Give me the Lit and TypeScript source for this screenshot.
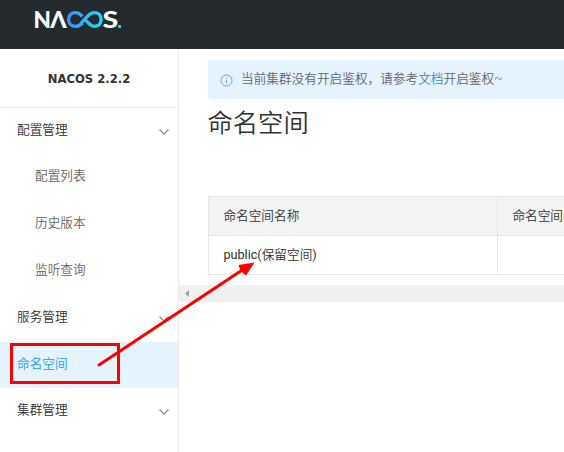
import { LitElement, html, css } from "lit";
import { customElement } from "lit/decorators.js";
import { classMap } from "lit/directives/class-map.js";

interface Entry { label: string; sub?: boolean; arrow?: boolean; active?: boolean; }

const entries: Entry[] = [
  { label: "配置管理", arrow: true },
  { label: "配置列表", sub: true },
  { label: "历史版本", sub: true },
  { label: "监听查询", sub: true },
  { label: "服务管理", arrow: true },
  { label: "命名空间", active: true },
  { label: "集群管理", arrow: true },
];

@customElement("app-root")
export class AppRoot extends LitElement {
  static styles = css`
    :host {
      display: flex; flex-direction: column; position: relative;
      width: 564px; height: 452px; overflow: hidden; background: #fff;
      font: 350 12.67px/20px Roboto, "Noto Sans CJK SC", sans-serif; color: #333;
    }
    * { box-sizing: border-box; }
    header { height: 49px; flex: none; background: #252a2f; padding-left: 32px; }
    .logo { display: block; width: 96px; height: 40px; }
    .logo text { font-family: Lato, sans-serif; font-weight: 900; fill: #fff; }
    .body { display: flex; flex: 1; min-height: 0; }
    nav { width: 179px; flex: none; border-right: 1px solid #ebebeb; }
    .version {
      height: 59px; border-bottom: 1px solid #ebebeb; text-align: center;
      font: bold 11.6px/60px "DejaVu Sans", sans-serif;
    }
    .item { height: 46.7px; display: flex; align-items: center; justify-content: space-between; padding: 0 8px 2px 17px; }
    .item.sub { padding: 0 8px 3.4px 35px; color: #666; }
    .item.active { background: #e4f3fe; color: #209bfa; height: 46px; margin-top: 0.6px; }
    .chev { width: 12px; height: 8px; margin-top: 3px; fill: none; stroke: #888; stroke-width: 1.1; }
    main { flex: 1; min-width: 0; padding-top: 11px; }
    .notice {
      height: 39px; margin-left: 29px; padding: 0 0 2px 12px; display: flex; align-items: center; gap: 8px;
      background: #e4f3fe; border-radius: 3px 0 0 3px; color: #666; white-space: nowrap;
    }
    .notice svg { width: 13px; height: 13px; margin-top: 3px; fill: none; stroke: #6699ff; }
    .notice a { color: #4a7fcb; }
    h1 { margin: 5px 0 0 28.5px; font-size: 25.3px; line-height: 40px; font-weight: 350; }
    .table {
      margin: 52px -40px 0 29px; display: grid; grid-template-columns: 289px 1fr;
      border: solid #e6e6e6; border-width: 1px 0 0 1px;
    }
    .cell { height: 39px; border: solid #e6e6e6; border-width: 0 1px 1px 0; padding-left: 14.4px; line-height: 37px; white-space: nowrap; }
    .latin { font-weight: 400; }
    .head { background: #f4f4f4; }
    .scroll { height: 17px; margin-top: 10px; background: #f0f0f0; display: flex; align-items: center; padding-left: 6px; }
    .scroll svg { width: 4px; height: 7px; fill: #a0a0a0; }
    .marks { position: absolute; inset: 0; width: 564px; height: 452px; }
  `;

  private chevron() {
    return html`<svg class="chev" viewBox="0 0 12 8"><path d="M1.5 1.5 6 6 10.5 1.5" /></svg>`;
  }

  render() {
    return html`
      <header>
        <svg class="logo" viewBox="32 0 96 40">
          <defs>
            <linearGradient id="wave" x1="66" x2="103" y1="0" y2="0" gradientUnits="userSpaceOnUse">
              <stop offset="0" stop-color="#4389f8" /><stop offset="1" stop-color="#18e1f5" />
            </linearGradient>
          </defs>
          <text x="33.4" y="27.6" font-size="23" textLength="17.4" lengthAdjust="spacingAndGlyphs">N</text>
          <text x="50.3" y="27.6" font-size="23" textLength="16.5" lengthAdjust="spacingAndGlyphs">Λ</text>
          <path d="M82.4 23C80 25.4 77.8 26.4 75.4 26.4C71.4 26.4 68.6 23.5 68.6 19.5S71.4 12.6 75.4 12.6C78.4 12.6 80.2 14 82.4 16.4M80.8 23.6C86.8 17.2 89.2 12.6 94.3 12.6C98.3 12.6 101.1 15.5 101.1 19.5S98.3 26.4 94.3 26.4C91 26.4 89 24 85.2 19.6" fill="none" stroke="url(#wave)" stroke-width="3.4" />
          <text x="102.4" y="27.6" font-size="23" textLength="15.8" lengthAdjust="spacingAndGlyphs">S</text>
          <rect x="118" y="25" width="3" height="3" fill="#18d8ee" />
        </svg>
      </header>
      <div class="body">
        <nav>
          <div class="version">NACOS 2.2.2</div>
          ${entries.map((e) => html`
            <div class=${classMap({ item: true, sub: !!e.sub, active: !!e.active })}>
              <span>${e.label}</span>${e.arrow ? this.chevron() : ""}
            </div>`)}
        </nav>
        <main>
          <div class="notice">
            <svg viewBox="0 0 13 13"><circle cx="6.5" cy="6.5" r="5.5" /><path d="M6.5 5.7V9.3M6.5 3.6V4.6" /></svg>
            <span>当前集群没有开启鉴权，请参考<a>文档</a>开启鉴权~</span>
          </div>
          <h1>命名空间</h1>
          <div class="table">
            <div class="cell head">命名空间名称</div>
            <div class="cell head">命名空间ID</div>
            <div class="cell"><span class="latin">public(</span>保留空间<span class="latin">)</span></div>
            <div class="cell"></div>
          </div>
          <div class="scroll"><svg viewBox="0 0 4 7"><path d="M4 0V7L0 3.5Z" /></svg></div>
        </main>
      </div>
      <svg class="marks" viewBox="0 0 564 452">
        <rect x="11.5" y="344.5" width="107" height="38" fill="none" stroke="#f00" stroke-width="3" />
        <path d="M99 365 243 269.5" stroke="#f00" stroke-width="3" stroke-linecap="round" />
        <path d="M254.5 262.5 238.5 265 240.5 271 246 275.5Z" fill="#f00" />
      </svg>
    `;
  }
}
